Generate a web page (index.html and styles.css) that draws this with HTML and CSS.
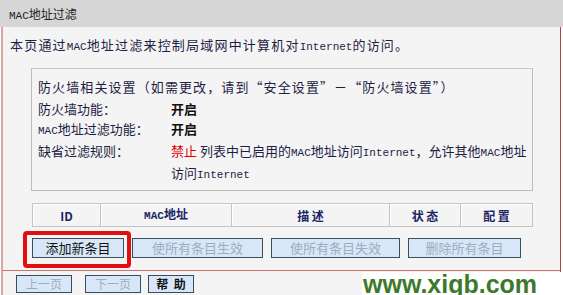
FILE: index.html
```html
<!DOCTYPE html>
<html lang="zh-CN">
<head>
    <meta charset="UTF-8">
    <meta name="viewport" content="width=device-width, initial-scale=1.0">
    <title>MAC地址过滤</title>
    <link rel="stylesheet" href="styles.css">
</head>
<body>
    <div class="title"><span class="en">MAC</span>地址过滤</div>
    <div class="panel">
        <p class="intro">本页通过<span class="en">MAC</span>地址过滤来控制局域网中计算机对<span class="en">Internet</span>的访问。</p>
        <div class="status">
            <div class="status-head">防火墙相关设置（如需更改，请到“安全设置”－“防火墙设置”）</div>
            <div class="row"><span class="label">防火墙功能：</span><b>开启</b></div>
            <div class="row"><span class="label"><span class="en">MAC</span>地址过滤功能：</span><b>开启</b></div>
            <div class="row">
                <span class="label">缺省过滤规则：</span>
                <span class="value"><span class="deny">禁止</span> 列表中已启用的<span class="en">MAC</span>地址访问<span class="en">Internet</span>，允许其他<span class="en">MAC</span>地址<br>访问<span class="en">Internet</span></span>
            </div>
        </div>
        <table class="list">
            <tr>
                <th class="c-id">ID</th>
                <th class="c-mac"><span class="en">MAC</span>地址</th>
                <th class="c-desc">描 述</th>
                <th class="c-state">状 态</th>
                <th class="c-conf">配 置</th>
            </tr>
        </table>
        <div class="actions">
            <button class="btn w-add">添加新条目</button>
            <button class="btn w-on" disabled>使所有条目生效</button>
            <button class="btn w-off" disabled>使所有条目失效</button>
            <button class="btn w-del" disabled>删除所有条目</button>
            <div class="highlight"></div>
        </div>
        <div class="pager">
            <button class="btn w-page" disabled>上一页</button>
            <button class="btn w-page" disabled>下一页</button>
            <button class="btn w-help">帮&nbsp;&nbsp;助</button>
        </div>
    </div>
    <div class="watermark">www.xiqb.com</div>
</body>
</html>
```

FILE: styles.css
```css
body {
    margin: 0;
    background-color: #fff;
    font-family: "Noto Sans CJK SC", "DejaVu Sans", sans-serif;
    font-size: 13px;
    color: #1e1e44;
    position: relative;
    width: 563px;
    height: 295px;
    overflow: hidden;
}
.title {
    height: 27px;
    line-height: 27px;
    padding-left: 9px;
    background-color: #d6d6d6;
    font-size: 12px;
    color: #222;
}
.panel {
    margin-left: 1px;
    width: 557px;
    border-left: 2px solid #dca3a3;
    border-right: 1px solid #b04848;
    border-bottom: 1px solid #c46a6a;
    background-color: #f4f4f4;
    padding-top: 8px;
    padding-bottom: 4px;
}
.en {
    font-family: "Liberation Mono", monospace;
    font-size: 11px;
}
.intro {
    margin: 0 0 11px 7px;
    line-height: 20px;
    letter-spacing: 1.2px;
}
.intro .en {
    letter-spacing: 0;
}
.status {
    margin-left: 28px;
    width: 500px;
    height: 102px;
    border: 1px solid #bcbcbc;
    border-top-color: #c8c8c8;
    padding: 8px 0 11px 0;
    line-height: 20px;
}
.status-head {
    padding-left: 6px;
    margin-bottom: 2px;
    letter-spacing: 1.1px;
}
.row {
    display: flex;
    padding-left: 6px;
}
.row .label {
    width: 133px;
    flex-shrink: 0;
    white-space: nowrap;
}
.row .value {
    white-space: nowrap;
}
.row b {
    color: #111;
}
.deny {
    color: #e00000;
}
.list {
    margin: 12px 0 0 29px;
    border-collapse: collapse;
    width: 501px;
}
.list th {
    height: 19px;
    padding: 0;
    border: 1px solid #c4c4c4;
    box-shadow: inset 1px 1px #fff;
    color: #1a2466;
    font-size: 12px;
    line-height: 19px;
    font-weight: bold;
    text-align: center;
}
.c-id { width: 67px; }
.c-mac { width: 130px; }
.c-desc { width: 157px; }
.c-state { width: 70px; }
.actions {
    position: relative;
    display: flex;
    gap: 8px;
    margin: 11px 0 0 29px;
    height: 20px;
}
.btn {
    box-sizing: border-box;
    height: 20px;
    padding: 0;
    background-color: #d8e7f8;
    border: 1px solid #34505e;
    font-family: inherit;
    font-size: 13px;
    line-height: 18px;
    color: #111;
}
.btn:disabled {
    color: #9eacbf;
}
.w-add { width: 92px; }
.w-on { width: 131px; }
.w-off { width: 129px; }
.w-del { width: 113px; }
.highlight {
    position: absolute;
    left: -9px;
    top: -7px;
    width: 108px;
    height: 37px;
    box-sizing: border-box;
    border: 4px solid #e01010;
    border-radius: 4px;
}
.pager {
    display: flex;
    gap: 13px;
    margin-top: 12px;
    border-top: 1px solid #c87272;
    padding: 4px 0 0 13px;
}
.pager .btn {
    height: 18px;
    font-size: 12px;
    line-height: 16px;
}
.w-page { width: 56px; }
.w-help {
    width: 46px;
    margin-left: -6px;
    font-weight: bold;
}
.watermark {
    position: absolute;
    left: 362px;
    top: 272px;
    width: 201px;
    height: 23px;
    background-color: #fff;
    font-family: "Liberation Sans", Arial, sans-serif;
    font-size: 25px;
    font-weight: bold;
    line-height: 24px;
    color: #3c7a2a;
    padding-left: 1px;
}
```
